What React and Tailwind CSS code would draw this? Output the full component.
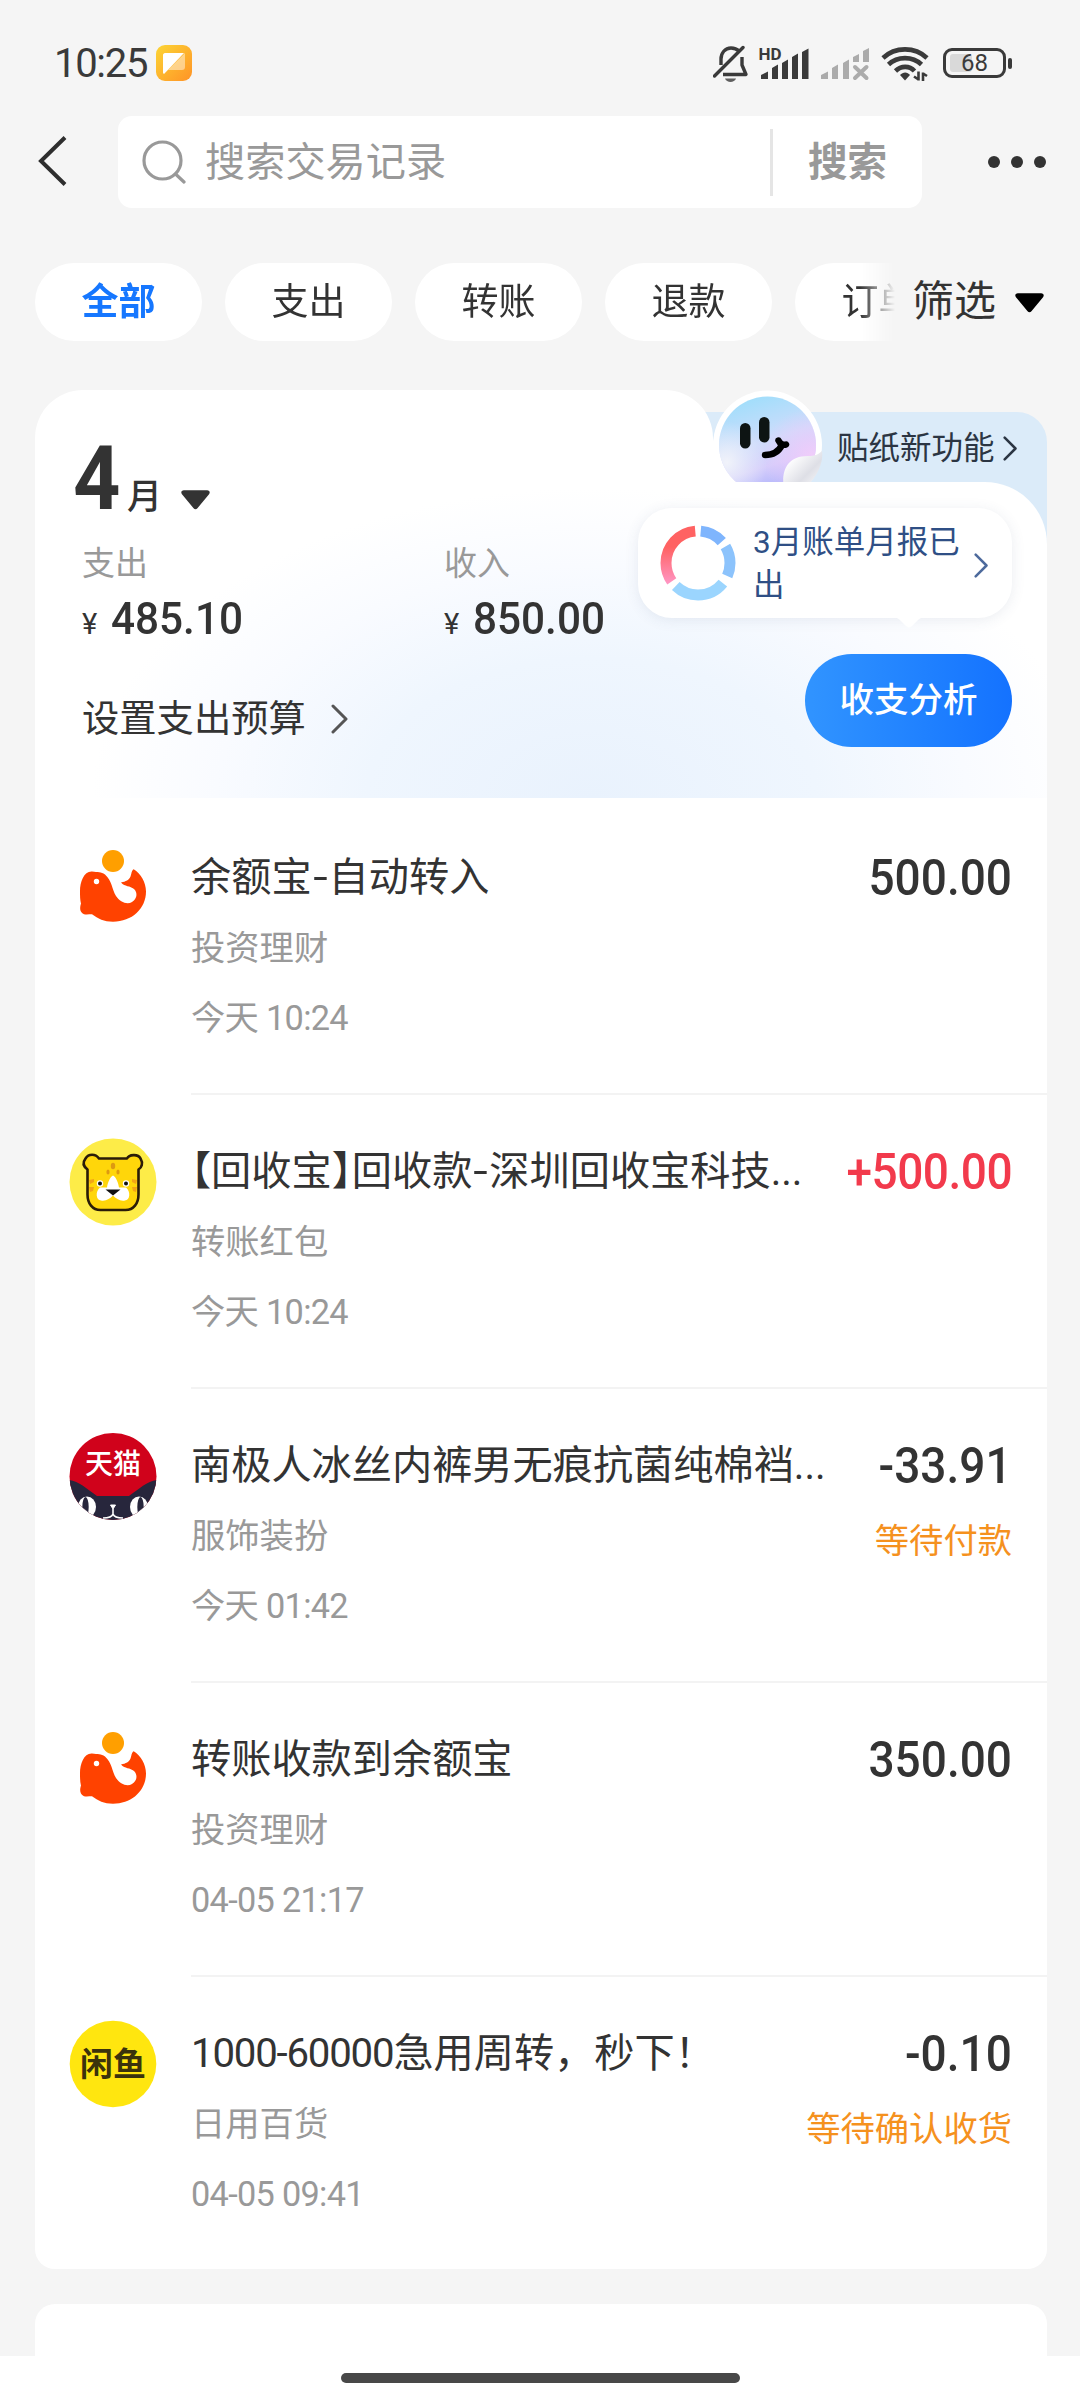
import React from 'react';

const FILTERS = ['全部', '支出', '转账', '退款', '订单'];

const BILLS = [
  {
    id: 1,
    icon: 'whale',
    title: '余额宝-自动转入',
    category: '投资理财',
    time: '今天 10:24',
    amount: '500.00',
  },
  {
    id: 2,
    icon: 'leopard',
    title: '【回收宝】回收款-深圳回收宝科技...',
    category: '转账红包',
    time: '今天 10:24',
    amount: '+500.00',
    income: true,
  },
  {
    id: 3,
    icon: 'tmall',
    title: '南极人冰丝内裤男无痕抗菌纯棉裆...',
    category: '服饰装扮',
    time: '今天 01:42',
    amount: '-33.91',
    status: '等待付款',
  },
  {
    id: 4,
    icon: 'whale',
    title: '转账收款到余额宝',
    category: '投资理财',
    time: '04-05 21:17',
    amount: '350.00',
  },
  {
    id: 5,
    icon: 'xianyu',
    title: '1000-60000急用周转，秒下！',
    category: '日用百货',
    time: '04-05 09:41',
    amount: '-0.10',
    status: '等待确认收货',
  },
];

const Chevron = ({ className, strokeWidth = 3 }) => (
  <svg className={className} viewBox="0 0 18 30" fill="none" stroke="currentColor" strokeWidth={strokeWidth}>
    <path d="M2 2l13 13L2 28" strokeLinecap="round" strokeLinejoin="round" />
  </svg>
);

const Caret = ({ className }) => (
  <svg className={className} viewBox="0 0 30 20" fill="currentColor">
    <path d="M3 0h24c2.500 0 3.500 2.200 2 4L17 18.500c-1.200 1.500-2.800 1.500-4 0L1 4C-.5 2.200.5 0 3 0z" />
  </svg>
);

const StatusBar = () => (
  <div className="h-[116px] pt-[45px] pl-[54px] pr-[68px] flex justify-between text-[#3a3a3a]">
    <div className="flex h-[37px]">
      <span className="w-[102px] text-[40px] leading-[38px] tracking-[-1.3px]">10:25</span>
      <svg className="w-[36px] h-[36px]" viewBox="0 0 36 36">
        <defs>
          <linearGradient id="appBadge" x1="0" y1="0" x2="1" y2="1">
            <stop offset="0" stopColor="#fcd535" />
            <stop offset="1" stopColor="#ff9326" />
          </linearGradient>
        </defs>
        <rect width="36" height="36" rx="9" fill="url(#appBadge)" />
        <path d="M9 8h19L8 29c-1-1-1-1-1-2V10c0-1 .8-2 2-2z" fill="#fff" />
        <path d="M29 8v14c0 2-1 3-3 3H12z" fill="#fff" opacity=".45" />
      </svg>
    </div>

    <div className="flex h-[37px]">
      {/* Muted bell */}
      <svg className="w-[36px] h-[38px]" viewBox="713 45 36 38" fill="none" stroke="currentColor" strokeWidth="3.400">
        <path d="M721 65v-6c0-6 4-11 10-11 3 0 6 1 8 3" />
        <path d="M742 57v8l4 9.500h-23" strokeLinejoin="round" />
        <path d="M714.500 76L743 47.500" strokeLinecap="round" />
        <path d="M725 78.500h11c-1.500 4.500-9.500 4.500-11 0z" fill="currentColor" stroke="none" opacity=".8" />
      </svg>
      {/* HD signal */}
      <svg className="w-[52px] h-[38px] ml-[9px]" viewBox="758 45 52 38" fill="currentColor">
        <text x="758.500" y="59.500" fontSize="17" fontWeight="700">HD</text>
        <path d="M761 79v-4l7-3.500v7.500zM772 79V68l6-3.500V79zM782 79V63l6-3.500V79zM792 79V57l6-3.500V79zM802 79V52l6.500-3.500V79z" />
      </svg>
      {/* No-service signal */}
      <svg className="w-[50px] h-[38px] ml-[11px]" viewBox="821 45 50 38" fill="#ababab">
        <path d="M821 79v-4l7-3.500v7.500zM832 79V68l6-3.500V79zM843 79V63l6-3.500V79zM853 62v-5l6-3v8zM863 62V51l6-3v14z" />
        <path d="M855 67l11.500 11M866.500 67L855 78" stroke="#ababab" strokeWidth="4" strokeLinecap="round" />
      </svg>
      {/* Wifi */}
      <svg className="w-[48px] h-[38px] ml-[10px]" viewBox="881 45 48 38" fill="none" stroke="currentColor" strokeWidth="4.600">
        <path d="M883 58c12-11.500 32-11.500 44 0" />
        <path d="M888.500 64.500c9-8.500 24-8.500 33 0" />
        <path d="M895.500 71c5.500-5.500 14-5.500 19 0" />
        <path d="M900 75c3-3.500 7.500-3.500 10 0l-5 5.500z" fill="currentColor" stroke="none" />
        <path d="M918.500 71.500v9M914 76.500l4.500 3M923 81v-8.500M923 73.500l4 2.500" strokeWidth="2.600" />
      </svg>
      {/* Battery */}
      <div className="ml-[14px] mt-[3px] flex items-center h-[30px]">
        <div className="relative w-[63px] h-[30px] rounded-[9px] border-[3px] border-[#3a3a3a] flex items-center justify-center">
          <div className="absolute left-[4px] top-[3px] bottom-[3px] w-[22px] bg-[#d9d9d9] rounded-[3px]" />
          <span className="relative text-[24px] leading-none">68</span>
        </div>
        <div className="ml-[2px] w-[4px] h-[11px] rounded-full bg-[#3a3a3a]" />
      </div>
    </div>
  </div>
);

const SearchHeader = () => (
  <div className="flex items-center h-[92px] pl-[37px]">
    <svg className="w-[30px] h-[50px] mt-[-2px]" viewBox="0 0 30 50" fill="none" stroke="#2e2e2e" strokeWidth="4">
      <path d="M28 1.500L4 25l24 23.500" />
    </svg>
    <div className="ml-[51px] w-[804px] h-[92px] bg-white rounded-[14px] flex items-center">
      <svg className="ml-[24px] w-[44px] h-[44px]" viewBox="0 0 44 44" fill="none" stroke="#999" strokeWidth="3.200">
        <circle cx="20.500" cy="20.500" r="18.500" />
        <path d="M33.500 34l8.500 8" strokeLinecap="round" />
      </svg>
      <span className="ml-[19px] pt-[2px] text-[40.200px] text-[#999]">搜索交易记录</span>
      <div className="ml-auto w-[3px] h-[67px] bg-[#e5e5e5]" />
      <span className="w-[149px] pt-[2px] text-center text-[39.500px] font-bold text-[#999]">搜索</span>
    </div>
    <div className="ml-[66px] flex gap-[11px]">
      <span className="w-[12px] h-[12px] rounded-full bg-[#333]" />
      <span className="w-[12px] h-[12px] rounded-full bg-[#333]" />
      <span className="w-[12px] h-[12px] rounded-full bg-[#333]" />
    </div>
  </div>
);

const FilterBar = () => (
  <div className="mt-[55px] pl-[35px] flex items-center h-[78px]">
    <div className="w-[860px] flex gap-[23px] overflow-hidden [mask-image:linear-gradient(to_right,#000_825px,transparent_860px)]">
      {FILTERS.map((name, i) => (
        <button
          key={name}
          className={`w-[167px] h-[78px] shrink-0 rounded-full bg-white text-[37px] leading-[80px] ${
            i === 0 ? 'text-[#1677ff] font-bold' : 'text-[#333]'
          }`}
        >
          {name}
        </button>
      ))}
    </div>
    <span className="ml-[17px] text-[42px] leading-[78px] text-[#333]">筛选</span>
    <Caret className="ml-[19px] mt-[2px] w-[29px] h-[20px] text-black" />
  </div>
);

const StickerFace = () => (
  <svg className="w-[110px] h-[92px] mt-[-22px] shrink-0" viewBox="713 390 110 92">
    <defs>
      <linearGradient id="faceBase" x1=".35" y1="0" x2=".65" y2="1">
        <stop offset="0" stopColor="#a0defb" />
        <stop offset=".45" stopColor="#cfdcfb" />
        <stop offset=".7" stopColor="#d6cdfb" />
        <stop offset="1" stopColor="#a5aefb" />
      </linearGradient>
      <radialGradient id="facePink" cx=".95" cy=".62" r=".5">
        <stop offset="0" stopColor="#f0cdfa" />
        <stop offset="1" stopColor="#e9c9fb" stopOpacity="0" />
      </radialGradient>
      <radialGradient id="facePale" cx=".08" cy=".68" r=".42">
        <stop offset="0" stopColor="#f1f3fa" />
        <stop offset="1" stopColor="#e6effa" stopOpacity="0" />
      </radialGradient>
      <linearGradient id="facePeel" x1="0" y1="0" x2="1" y2="1">
        <stop offset=".2" stopColor="#fff" />
        <stop offset=".6" stopColor="#dedfe6" />
        <stop offset="1" stopColor="#fff" />
      </linearGradient>
    </defs>
    <circle cx="767.500" cy="445" r="54.500" fill="#fff" />
    <path d="M713 440v42h40z" fill="#fff" />
    <circle cx="767.500" cy="445" r="48.500" fill="url(#faceBase)" />
    <circle cx="767.500" cy="445" r="48.500" fill="url(#facePink)" />
    <circle cx="767.500" cy="445" r="48.500" fill="url(#facePale)" />
    <path d="M784 490c-3-18 2-34 24-34 7 0 11-2 14-5 2 14-8 31-20 39z" fill="url(#facePeel)" />
    <rect x="740" y="423" width="10.500" height="25.500" rx="5.250" fill="#0d1413" />
    <rect x="759" y="417" width="10.500" height="25.500" rx="5.250" fill="#0d1413" />
    <path d="M765 455c9 0 14-4 17-10M778.500 440.500c1.500 3.500 5 5 7.500 4" fill="none" stroke="#000" strokeWidth="6.500" strokeLinecap="round" />
  </svg>
);

const ReportBubble = () => (
  <div className="relative w-[374px] h-[110px] rounded-[34px] bg-white shadow-[0_2px_14px_rgba(60,80,120,0.10)] flex items-center">
    <svg className="ml-[22px] w-[76px] h-[76px] mt-[-1px]" viewBox="0 0 76 76">
      <defs>
        {/* The ring is rotated, so x runs bottom to top here */}
        <linearGradient id="donutPink" x1="0" y1="0" x2="1" y2="0">
          <stop offset=".15" stopColor="#ff98c8" />
          <stop offset=".75" stopColor="#ff6262" />
        </linearGradient>
      </defs>
      <g transform="rotate(-90 38 38)" fill="none" strokeWidth="11">
        <circle cx="38" cy="38" r="32" pathLength="360" stroke="#7fb5fd" strokeDasharray="43 317" strokeDashoffset="-5" />
        <circle cx="38" cy="38" r="32" pathLength="360" stroke="#8cc3fc" strokeDasharray="55 305" strokeDashoffset="-59" />
        <circle cx="38" cy="38" r="32" pathLength="360" stroke="#9bd5fe" strokeDasharray="95 265" strokeDashoffset="-129" />
        <circle cx="38" cy="38" r="32" pathLength="360" stroke="url(#donutPink)" strokeDasharray="120 240" strokeDashoffset="-235" />
      </g>
    </svg>
    <p className="ml-[17px] pt-[2px] w-[212px] text-[31.500px] leading-[43px] text-[#2f4f85]">3月账单月报已出</p>
    <Chevron className="ml-[9px] mt-[5px] w-[15px] h-[25px] text-[#4d6a9c]" />
    <svg className="absolute left-[254px] top-[109px] w-[34px] h-[12px]" viewBox="0 0 34 12" fill="#fff">
      <path d="M0 0h34c-5 0-7 2-10 5l-4 4c-2 2-4 2-6 0l-4-4C7 2 5 0 0 0z" />
    </svg>
  </div>
);

const Money = ({ value }) => (
  <div className="mt-[11px] h-[50px] flex items-baseline text-[#333]">
    <span className="w-[29px] text-[29px] leading-[50px]">¥</span>
    <span className="inline-block origin-left scale-x-[0.94] text-[45px] leading-[50px] font-medium">{value}</span>
  </div>
);

const MonthSummary = () => (
  <div>
    <div className="flex h-[92px]">
      <div className="relative z-10 w-[678px] h-[92px] bg-white rounded-t-[48px] pl-[38px] pt-[44px]">
        <div className="flex items-baseline text-[#333]">
          <span className="w-[54px] origin-left scale-x-[0.93] text-[89px] leading-[90px] font-bold">4</span>
          <span className="text-[35px] leading-none font-medium">月</span>
          <Caret className="relative top-[1px] ml-[19px] w-[29px] h-[20px]" />
        </div>
      </div>
      <div className="ml-[-48px] mt-[22px] flex-1 h-[70px] pl-[48px] bg-[#dbebf9] rounded-tr-[30px] flex items-start">
        <StickerFace />
        <span className="ml-[14px] text-[31.500px] leading-[73px] text-[#2b3543]">贴纸新功能</span>
        <Chevron className="ml-[8px] mt-[24px] w-[15px] h-[25px] text-[#2b3543]" />
      </div>
    </div>

    <div className="bg-[#dbebf9]">
      <div className="h-[316px] rounded-tr-[62px] bg-white bg-[radial-gradient(ellipse_500px_310px_at_55%_100%,#e9f2fd_0%,#eff6fe_45%,#f9fbff_75%,#ffffff_100%)] flex justify-between pl-[47px] pr-[35px]">
        <div className="pt-[61px]">
          <div className="flex">
            <div className="w-[362px]">
              <div className="h-[40px] text-[33px] leading-[42px] text-[#999]">支出</div>
              <Money value="485.10" />
            </div>
            <div>
              <div className="h-[40px] text-[33px] leading-[42px] text-[#999]">收入</div>
              <Money value="850.00" />
            </div>
          </div>
          <div className="mt-[50px] h-[50px] flex items-center text-[#333]">
            <span className="text-[37.300px] leading-[50px]">设置支出预算</span>
            <Chevron className="ml-[25px] w-[18px] h-[30px] text-[#555]" />
          </div>
        </div>
        <div className="pt-[26px] flex flex-col items-end">
          <ReportBubble />
          <button className="mt-[36px] w-[207px] h-[93px] rounded-full bg-gradient-to-r from-[#3194ff] to-[#1472ff] text-white text-[34.500px] font-medium">
            收支分析
          </button>
        </div>
      </div>
    </div>
  </div>
);

const WhaleIcon = () => (
  <svg className="w-[88px] h-[88px]" viewBox="69 844 88 88">
    <circle cx="113" cy="861" r="11" fill="#ff9f00" />
    <path
      d="M80 891c0-9 4-20 12-19.500 6 1 9 0 13 3 7 6 7 15 11 21.500 4 6 11 9 16 6 5-3 6-9 2-13-4-3.500-9-2-13-6.500 5-1 8-2.500 9.500-6 1-2.500 1-6 3.200-7.200 7 4 12.300 13.200 12.300 22.200 0 17-14 30.200-33 30.200-9 0-15-3-21-7.500-3 0-5 .5-8 0-5-2-4-8-3-10.500-1-4-1-8-1-12.500z"
      fill="#ff4200"
    />
    <circle cx="96.500" cy="881.500" r="2.700" fill="#fff" />
  </svg>
);

const LeopardIcon = () => (
  <svg className="w-[88px] h-[88px]" viewBox="69 1138 88 88">
    <circle cx="113" cy="1182" r="43.500" fill="#fdec48" />
    <path
      d="M99 1158.500h28c2-4 11-5 13.500 0 3 5 1 9-2 11v25c0 9-5 15.500-13 15.500h-25c-8 0-13-6.500-13-15.500v-25c-4-3-5-7-2-11 3-5 10-5 13.500 0z"
      fill="#ffd60a"
      stroke="#2a1c08"
      strokeWidth="2.600"
      strokeLinejoin="round"
    />
    <path d="M89 1180l5-1v3l-4 2zM89 1187l5 0-1 4-3 1zM137 1180l-5-1v3l4 2zM137 1187l-5 0 1 4 3 1z" fill="#f2a516" />
    <g fill="#dd9a12">
      <ellipse cx="113" cy="1166" rx="2.200" ry="3.200" />
      <ellipse cx="108" cy="1172" rx="1.600" ry="2.600" />
      <ellipse cx="118" cy="1172" rx="1.600" ry="2.600" />
    </g>
    <path d="M113 1175.500c3 1 5.500 8 6 12h7c5 4 4 13-1 13-5 1-9-2-12-5-3 3-7 6-12 5-5 0-6-9-1-13h7c.5-4 3-11 6-12z" fill="#fff" />
    <path d="M105.500 1189.500h15l-7.500 6z" fill="#111" />
    <circle cx="100" cy="1183.500" r="3.200" fill="#fff" />
    <circle cx="126" cy="1183.500" r="3.200" fill="#fff" />
    <circle cx="100" cy="1183.500" r="2" fill="#111" />
    <circle cx="126" cy="1183.500" r="2" fill="#111" />
  </svg>
);

const TmallIcon = () => (
  <svg className="w-[88px] h-[88px]" viewBox="69 1432 88 88">
    <defs>
      <clipPath id="tmallClip">
        <circle cx="113" cy="1476.500" r="43.500" />
      </clipPath>
    </defs>
    <g clipPath="url(#tmallClip)">
      <rect x="69" y="1432" width="88" height="90" fill="#d0021b" />
      <path d="M69 1480c10 1 18 9 28 16h32c10-7 18-15 28-16v42H69z" fill="#27263c" />
      <ellipse cx="87" cy="1507" rx="9" ry="10.500" fill="#fff" />
      <ellipse cx="139" cy="1507" rx="9" ry="10.500" fill="#fff" />
      <ellipse cx="85.500" cy="1507" rx="3.200" ry="10" fill="#27263c" />
      <ellipse cx="140.500" cy="1507" rx="3.200" ry="10" fill="#27263c" />
      <path d="M110.500 1505h5l-2.500 4z" fill="#fff" stroke="#fff" strokeLinejoin="round" />
      <path d="M113 1509v5c-1 3-5 4-10 4M113 1514c1 3 5 4 10 4" fill="none" stroke="#fff" strokeWidth="1.600" />
    </g>
    <text x="113" y="1474" textAnchor="middle" fontSize="28" fontWeight="500" fill="#fff">天猫</text>
  </svg>
);

const XianyuIcon = () => (
  <svg className="w-[88px] h-[88px]" viewBox="69 2020 88 88">
    <circle cx="113" cy="2064" r="43.300" fill="#ffe60f" />
    <text x="113" y="2076" textAnchor="middle" fontSize="33" fontWeight="700" fill="#3b330c">闲鱼</text>
  </svg>
);

const ICONS = {
  whale: WhaleIcon,
  leopard: LeopardIcon,
  tmall: TmallIcon,
  xianyu: XianyuIcon,
};

// Brackets are half-width, digit runs a little tighter, a lone hyphen a little wider
const titleStyle = (part) => {
  if (part === '【' || part === '】') return "[font-feature-settings:'halt']";
  if (part === '-') return 'inline-block w-[17px] text-center scale-x-[1.3]';
  if (/^\d/.test(part)) return 'tracking-[-1.200px]';
  return '';
};

const BillRow = ({ bill, last }) => {
  const Icon = ICONS[bill.icon];
  return (
    <div className="flex h-[294px] pl-[34px]">
      <div className="w-[122px] pt-[43px]">
        <Icon />
      </div>
      <div className={`flex-1 flex justify-between pr-[35px] whitespace-nowrap ${last ? '' : 'border-b-2 border-[#f3f3f3]'}`}>
        <div>
          <div className="mt-[50px] h-[52px] text-[40.200px] leading-[53px] text-[#333]">
            {bill.title.split(/([【】]|\d[\d-]+|-)/).map((part, i) => (
              <span key={i} className={titleStyle(part)}>{part}</span>
            ))}
          </div>
          <div className="mt-[24px] h-[44px] text-[34.300px] leading-[43px] text-[#999]">{bill.category}</div>
          <div className="mt-[25px] h-[44px] text-[34.300px] leading-[44px] text-[#999] tracking-[-0.700px]">{bill.time}</div>
        </div>
        <div className="text-right">
          <div className={`mt-[50px] h-[54px] origin-right scale-x-[0.92] text-[50px] leading-[55px] font-medium ${bill.income ? 'text-[#f23a4c] tracking-[-0.500px]' : 'text-[#333]'}`}>
            {bill.amount}
          </div>
          {bill.status && <div className="mt-[26px] text-[34.300px] leading-[44px] text-[#f5911e]">{bill.status}</div>}
        </div>
      </div>
    </div>
  );
};

export default function App() {
  return (
    <div className="w-[1080px] h-[2400px] overflow-hidden bg-[#f5f5f5] font-['Roboto','Noto_Sans_CJK_SC',sans-serif] flex flex-col">
      <StatusBar />
      <SearchHeader />
      <FilterBar />

      <div className="mt-[49px] ml-[35px] w-[1012px]">
        <MonthSummary />
        <div className="bg-white rounded-b-[20px] pt-[3px] h-[1471px] overflow-hidden">
          {BILLS.map((bill, i) => (
            <BillRow key={bill.id} bill={bill} last={i === BILLS.length - 1} />
          ))}
        </div>
      </div>

      {/* Next month's card peeks out above the gesture bar */}
      <div className="mt-[35px] ml-[35px] w-[1012px] h-[52px] shrink-0 bg-white rounded-t-[20px]" />
      <div className="h-[44px] shrink-0 bg-white flex justify-center pt-[17px]">
        <div className="w-[399px] h-[10px] rounded-full bg-[#484848]" />
      </div>
    </div>
  );
}
